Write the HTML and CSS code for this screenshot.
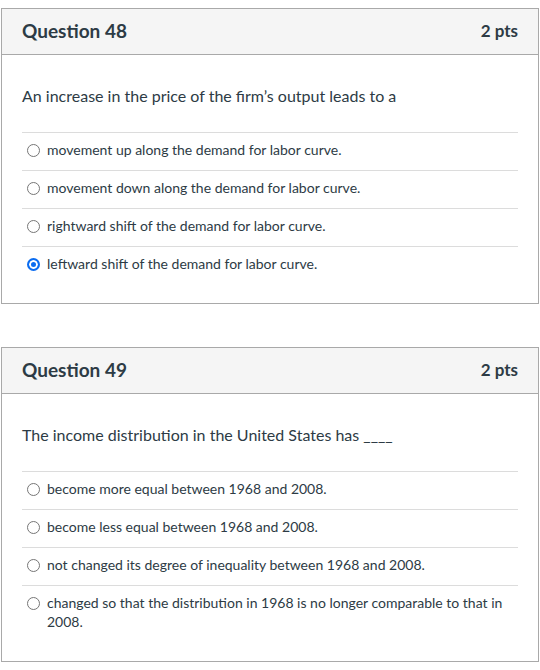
FILE: index.html
```html
<!DOCTYPE html>
<html>
<head>
<meta charset="utf-8">
<link rel="stylesheet" href="styles.css">
</head>
<body>
<div class="quiz">
  <section class="card">
    <header class="card-head">
      <h2 class="title">Question 48</h2>
      <span class="pts">2 pts</span>
    </header>
    <div class="card-body">
      <p class="qtext">An increase in the price of the firm’s output leads to a</p>
      <ul class="answers">
        <li class="answer"><span class="radio"></span><span class="label">movement up along the demand for labor curve.</span></li>
        <li class="answer"><span class="radio"></span><span class="label">movement down along the demand for labor curve.</span></li>
        <li class="answer"><span class="radio"></span><span class="label">rightward shift of the demand for labor curve.</span></li>
        <li class="answer"><span class="radio checked"></span><span class="label">leftward shift of the demand for labor curve.</span></li>
      </ul>
    </div>
  </section>
  <section class="card">
    <header class="card-head">
      <h2 class="title">Question 49</h2>
      <span class="pts">2 pts</span>
    </header>
    <div class="card-body">
      <p class="qtext">The income distribution in the United States has ____</p>
      <ul class="answers">
        <li class="answer"><span class="radio"></span><span class="label">become more equal between 1968 and 2008.</span></li>
        <li class="answer"><span class="radio"></span><span class="label">become less equal between 1968 and 2008.</span></li>
        <li class="answer"><span class="radio"></span><span class="label">not changed its degree of inequality between 1968 and 2008.</span></li>
        <li class="answer"><span class="radio"></span><span class="label">changed so that the distribution in 1968 is no longer comparable to that in 2008.</span></li>
      </ul>
    </div>
  </section>
</div>
</body>
</html>
```
FILE: styles.css
```css
html, body {
  margin: 0;
  padding: 0;
  background: #ffffff;
}
body {
  font-family: Lato, "Open Sans", sans-serif;
  color: #2d3b45;
}
.quiz {
  padding: 8px 1px 0 1px;
  display: flex;
  flex-direction: column;
  gap: 43px;
}
.card {
  border: 1px solid #a9a9a9;
}
.card-head {
  display: flex;
  justify-content: space-between;
  align-items: center;
  box-sizing: border-box;
  height: 46px;
  padding: 0 20px 3px 20px;
  background: #f5f5f5;
  border-bottom: 1px solid #a9a9a9;
}
.title {
  margin: 0;
  font-size: 19px;
  font-weight: 700;
  color: #2d3b45;
}
.pts {
  font-size: 17px;
  font-weight: 700;
  color: #2d3b45;
}
.card-body {
  padding: 29px 20px 19px 20px;
}
.qtext {
  margin: 0 0 24px 0;
  font-size: 16px;
  line-height: 24px;
}
.answers {
  list-style: none;
  margin: 0;
  padding: 0;
}
.answer {
  display: flex;
  align-items: flex-start;
  gap: 7px;
  padding: 7px 0 11px 5px;
  border-top: 1px solid #dcdcdc;
  font-size: 14px;
  line-height: 19px;
}
.radio {
  flex: none;
  width: 13px;
  height: 13px;
  margin-top: 4px;
  box-sizing: border-box;
  border: 1px solid #767676;
  border-radius: 50%;
  background: #fff;
}
.radio.checked {
  border: 2px solid #0b6cf0;
  box-shadow: inset 0 0 0 2px #fff;
  background: #0b6cf0;
}
.label {
  flex: 1;
}
```
